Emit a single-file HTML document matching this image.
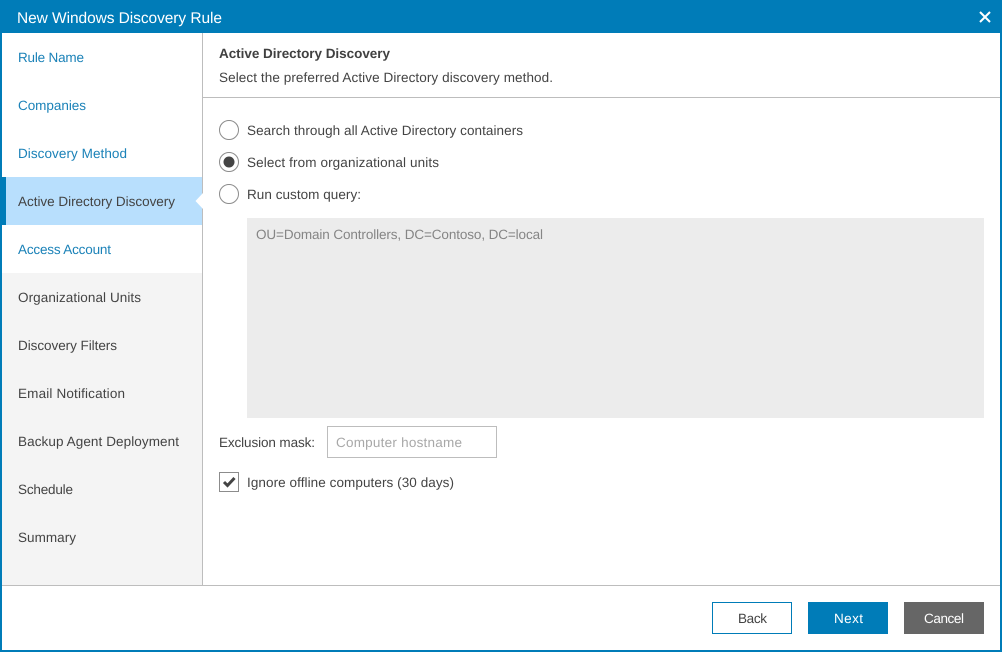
<!DOCTYPE html>
<html lang="en">
<head>
<meta charset="utf-8">
<title>New Windows Discovery Rule</title>
<style>
html,body{margin:0;padding:0;background:#fff;width:1002px;height:652px;overflow:hidden}
svg{display:block}
text{font-family:"Liberation Sans",Arial,sans-serif;font-size:13.5px;fill:#444;text-rendering:geometricPrecision}
.l{fill:#1b82b8}
.t{fill:#fff;font-size:15.5px}
.b{font-weight:bold;fill:#404040}
</style>
</head>
<body>
<svg width="1002" height="652" viewBox="0 0 1002 652" xmlns="http://www.w3.org/2000/svg">
<rect width="1002" height="652" fill="#fff"/>
<!-- sidebar -->
<rect x="2" y="273" width="200" height="312" fill="#f4f4f4"/>
<rect x="6" y="177" width="196" height="48" fill="#b8dffd"/>
<rect x="2" y="177" width="4" height="48" fill="#007cb8"/>
<rect x="202" y="33" width="1" height="552" fill="#bdbdbd"/>
<path d="M203 193L195.500 201L203 209Z" fill="#fff"/>
<rect x="203" y="97" width="797" height="1" fill="#bdbdbd"/>
<rect x="2" y="585" width="998" height="1" fill="#bdbdbd"/>
<!-- frame -->
<rect width="1002" height="33" fill="#007cb8"/>
<rect x="0" y="0" width="2" height="652" fill="#007cb8"/>
<rect x="1000" y="0" width="2" height="652" fill="#007cb8"/>
<rect x="0" y="650" width="1002" height="2" fill="#007cb8"/>
<text class="t" x="17" y="23" textLength="205" lengthAdjust="spacing">New Windows Discovery Rule</text>
<path d="M980 12L990 22M990 12L980 22" stroke="#fff" stroke-width="2" fill="none"/>
<!-- nav -->
<text class="l" x="18" y="62" textLength="66" lengthAdjust="spacing">Rule Name</text>
<text class="l" x="18" y="110" textLength="68" lengthAdjust="spacing">Companies</text>
<text class="l" x="18" y="158" textLength="109" lengthAdjust="spacing">Discovery Method</text>
<text x="18" y="206" textLength="157" lengthAdjust="spacing">Active Directory Discovery</text>
<text class="l" x="18" y="254" textLength="93" lengthAdjust="spacing">Access Account</text>
<text x="18" y="302" textLength="123" lengthAdjust="spacing">Organizational Units</text>
<text x="18" y="350" textLength="99" lengthAdjust="spacing">Discovery Filters</text>
<text x="18" y="398" textLength="107" lengthAdjust="spacing">Email Notification</text>
<text x="18" y="446" textLength="161" lengthAdjust="spacing">Backup Agent Deployment</text>
<text x="18" y="494" textLength="55" lengthAdjust="spacing">Schedule</text>
<text x="18" y="542" textLength="58" lengthAdjust="spacing">Summary</text>
<!-- heading -->
<text class="b" x="219" y="58" textLength="171" lengthAdjust="spacing">Active Directory Discovery</text>
<text x="219" y="82" textLength="334" lengthAdjust="spacing">Select the preferred Active Directory discovery method.</text>
<!-- radios -->
<circle cx="229" cy="130" r="9.500" fill="#fff" stroke="#8c8c8c" stroke-width="1"/>
<circle cx="229" cy="162" r="9.500" fill="#fff" stroke="#8c8c8c" stroke-width="1"/>
<circle cx="229" cy="162" r="5.500" fill="#444"/>
<circle cx="229" cy="194" r="9.500" fill="#fff" stroke="#8c8c8c" stroke-width="1"/>
<text x="247" y="135" textLength="276" lengthAdjust="spacing">Search through all Active Directory containers</text>
<text x="247" y="167" textLength="192" lengthAdjust="spacing">Select from organizational units</text>
<text x="247" y="199" textLength="114" lengthAdjust="spacing">Run custom query:</text>
<!-- query -->
<rect x="247" y="218" width="737" height="200" fill="#ececec"/>
<text x="256" y="239" textLength="287" lengthAdjust="spacing" style="fill:#858585">OU=Domain Controllers, DC=Contoso, DC=local</text>
<!-- exclusion -->
<text x="219" y="447" textLength="96" lengthAdjust="spacing">Exclusion mask:</text>
<rect x="327.500" y="426.500" width="169" height="31" fill="#fff" stroke="#bdbdbd"/>
<text x="336" y="447" textLength="126" lengthAdjust="spacing" style="fill:#a8a8a8">Computer hostname</text>
<!-- checkbox -->
<rect x="219.500" y="472.500" width="19" height="19" fill="#fff" stroke="#8c8c8c"/>
<path d="M224 482L227.500 485.500L234.500 478" fill="none" stroke="#444" stroke-width="3"/>
<text x="247" y="487" textLength="207" lengthAdjust="spacing">Ignore offline computers (30 days)</text>
<!-- buttons -->
<rect x="712.500" y="602.500" width="79" height="31" fill="#fff" stroke="#007cb8"/>
<text x="738" y="623" textLength="29" lengthAdjust="spacing">Back</text>
<rect x="808" y="602" width="80" height="32" fill="#007cb8"/>
<text x="834" y="623" textLength="29" lengthAdjust="spacing" style="fill:#fff">Next</text>
<rect x="904" y="602" width="80" height="32" fill="#666"/>
<text x="924" y="623" textLength="40" lengthAdjust="spacing" style="fill:#fff">Cancel</text>
</svg>
</body>
</html>
